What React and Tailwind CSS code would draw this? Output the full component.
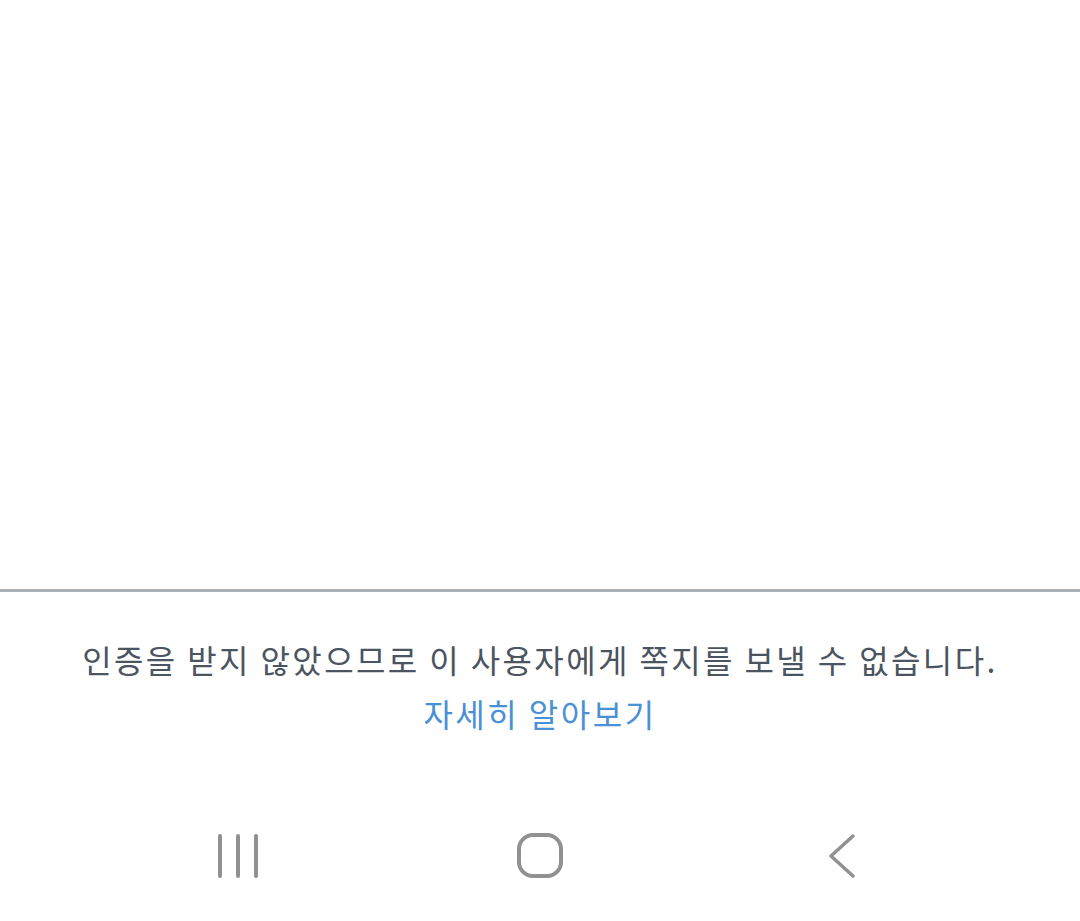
export default function App() {
  return (
    <div className="flex h-[921px] w-[1080px] flex-col bg-white">
      <div className="flex-1" />
      <div className="h-[3px] w-full bg-[#aab0b7]" />
      <div className="flex flex-col items-center pt-[40px] pb-[51px] font-['Noto_Sans_CJK_KR','Noto_Sans',sans-serif]">
        <p className="text-[32px] leading-[54px] tracking-[2.4px] text-[#4b5461] whitespace-nowrap">
          인증을 받지 않았으므로 이 사용자에게 쪽지를 보낼 수 없습니다.
        </p>
        <p className="text-[32px] leading-[54px] tracking-[2.5px] text-[#4a90d6] whitespace-nowrap">
          자세히 알아보기
        </p>
      </div>
      <div className="flex h-[130px] items-center justify-center">
        <div className="flex w-[302px] justify-center">
          <svg width="44" height="46" viewBox="0 0 44 46" fill="none" stroke="#919191" strokeWidth="4" strokeLinecap="round">
            <line x1="4" y1="3" x2="4" y2="43" />
            <line x1="22" y1="3" x2="22" y2="43" />
            <line x1="40" y1="3" x2="40" y2="43" />
          </svg>
        </div>
        <div className="flex w-[302px] justify-center">
          <svg width="46" height="46" viewBox="0 0 46 46" fill="none" stroke="#919191" strokeWidth="4">
            <rect x="2" y="2" width="42" height="41" rx="14" ry="14" />
          </svg>
        </div>
        <div className="flex w-[302px] justify-center">
          <svg width="32" height="46" viewBox="0 0 32 46" fill="none" stroke="#919191" strokeWidth="3.5" strokeLinecap="round" strokeLinejoin="round">
            <polyline points="27,3 5,23 27,43" />
          </svg>
        </div>
      </div>
    </div>
  );
}
